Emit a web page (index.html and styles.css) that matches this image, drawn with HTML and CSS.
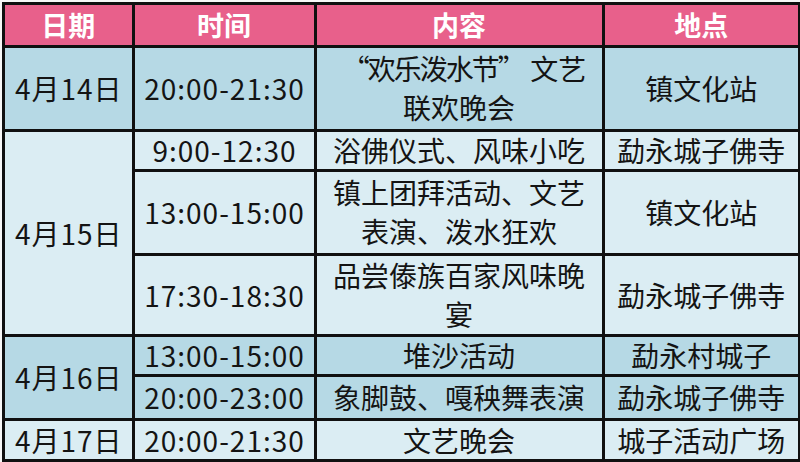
FILE: index.html
```html
<!DOCTYPE html>
<html lang="zh-CN">
<head>
<meta charset="utf-8">
<title>泼水节活动安排</title>
<link rel="stylesheet" href="styles.css">
</head>
<body>
<table class="schedule">
  <colgroup>
    <col class="c-date">
    <col class="c-time">
    <col class="c-content">
    <col class="c-place">
  </colgroup>
  <thead>
    <tr class="r-head">
      <th>日期</th><th>时间</th><th>内容</th><th>地点</th>
    </tr>
  </thead>
  <tbody>
    <tr class="dark r-84">
      <td class="num">4月14日</td>
      <td class="num">20:00-21:30</td>
      <td class="two indent"><span class="tight">“欢乐泼水节”</span> 文艺<br>联欢晚会</td>
      <td>镇文化站</td>
    </tr>
    <tr class="light r-40">
      <td class="num" rowspan="3">4月15日</td>
      <td class="num">9:00-12:30</td>
      <td>浴佛仪式、风味小吃</td>
      <td>勐永城子佛寺</td>
    </tr>
    <tr class="light r-84">
      <td class="num">13:00-15:00</td>
      <td class="two">镇上团拜活动、文艺<br>表演、泼水狂欢</td>
      <td>镇文化站</td>
    </tr>
    <tr class="light r-81">
      <td class="num">17:30-18:30</td>
      <td class="two">品尝傣族百家风味晚<br>宴</td>
      <td>勐永城子佛寺</td>
    </tr>
    <tr class="dark r-40">
      <td class="num" rowspan="2">4月16日</td>
      <td class="num">13:00-15:00</td>
      <td>堆沙活动</td>
      <td>勐永村城子</td>
    </tr>
    <tr class="dark r-44">
      <td class="num">20:00-23:00</td>
      <td>象脚鼓、嘎秧舞表演</td>
      <td>勐永城子佛寺</td>
    </tr>
    <tr class="light r-last">
      <td class="num">4月17日</td>
      <td class="num">20:00-21:30</td>
      <td>文艺晚会</td>
      <td>城子活动广场</td>
    </tr>
  </tbody>
</table>
</body>
</html>
```

FILE: styles.css
```css
html, body {
  margin: 0;
  padding: 0;
  background: #f7f7f7;
}

body {
  width: 800px;
  height: 462px;
  overflow: hidden;
  font-family: "Noto Sans CJK SC", "Noto Sans", sans-serif;
  color: #141414;
}

.schedule {
  margin: 2px 0 0 2px;
  width: 796px;
  border-collapse: collapse;
  table-layout: fixed;
  border: 3px solid #101010;
}

.c-date { width: 129.5px; }
.c-time { width: 182px; }
.c-content { width: 288px; }
.c-place { width: 196.5px; }

.schedule th,
.schedule td {
  border: 3px solid #101010;
  padding: 0;
  text-align: center;
  vertical-align: middle;
  white-space: nowrap;
}

.schedule th {
  background: #e8608b;
  color: #ffffff;
  font-size: 27px;
  font-weight: 700;
  line-height: 34px;
}

.schedule td {
  font-size: 28px;
  line-height: 34px;
}

.schedule td.num {
  letter-spacing: 1px;
  text-indent: 1px;
}

.schedule td.two {
  line-height: 39px;
}

.schedule td.indent {
  text-indent: 10px;
}

.tight {
  letter-spacing: -2px;
}

.dark td { background: #b6d9e5; }
.light td { background: #dbedf3; }

.r-head { height: 42.5px; }
.r-84 { height: 84px; }
.r-81 { height: 81px; }
.r-40 { height: 40px; }
.r-44 { height: 44px; }
.r-last { height: 41.5px; }
```
